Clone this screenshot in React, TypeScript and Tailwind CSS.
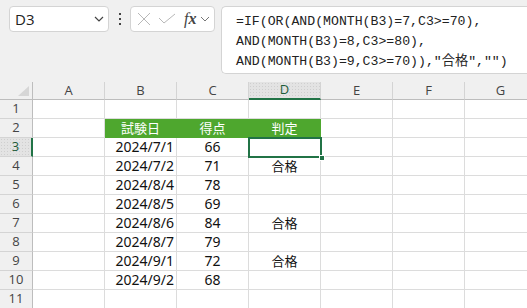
import React from 'react';

const cols = ['A', 'B', 'C', 'D', 'E', 'F', 'G'];

type Row = { b?: string; c?: string; d?: string; head?: boolean };

const rows: Row[] = [
  {},
  { b: '試験日', c: '得点', d: '判定', head: true },
  { b: '2024/7/1', c: '66' },
  { b: '2024/7/2', c: '71', d: '合格' },
  { b: '2024/8/4', c: '78' },
  { b: '2024/8/5', c: '69' },
  { b: '2024/8/6', c: '84', d: '合格' },
  { b: '2024/8/7', c: '79' },
  { b: '2024/9/1', c: '72', d: '合格' },
  { b: '2024/9/2', c: '68' },
  {},
];

const uiFont = { fontFamily: '"Open Sans", "Noto Sans", sans-serif' };
const cellFont = { fontFamily: '"Noto Sans", "Noto Sans CJK JP", sans-serif' };
const monoFont = { fontFamily: '"Liberation Mono", "Noto Sans CJK JP", monospace' };

const dotted = 'bg-[#e3e3e3] bg-[radial-gradient(#cfcfcf_0.6px,transparent_0.8px)] bg-[length:3px_3px]';

function Cell({ text, align, head, col }: { text?: string; align: string; head?: boolean; col: number }) {
  const green = head && col >= 1 && col <= 3;
  const jp = text ? /[^\x00-\x7f]/.test(text) : false;
  return (
    <div
      className={`h-[19px] border-r border-b flex items-center leading-none ${jp ? 'text-[13px]' : 'text-[14px]'} ${align} ${
        green ? 'bg-[#4ea72e] border-[#4ea72e] text-white' : 'bg-white border-[#dcdcdc] text-[#111]'
      }`}
      style={cellFont}
    >
      {text}
    </div>
  );
}

export default function App() {
  return (
    <div className="w-[527px] h-[308px] overflow-hidden bg-white relative">
      {/* toolbar */}
      <div className="h-[82px] bg-[#f0f0f0] flex items-start pt-[6px] pl-[9px]">
        <div className="w-[100px] h-[26px] bg-white border border-[#d4d4d4] rounded-[4px] flex items-center justify-between pl-[5px] pr-[4px]">
          <span className="text-[15px] text-[#222]" style={uiFont}>D3</span>
          <svg width="10" height="6" viewBox="0 0 10 6">
            <path d="M1 1 L5 5 L9 1" fill="none" stroke="#444" strokeWidth="1.2" />
          </svg>
        </div>
        <div className="w-[21px] h-[26px] flex flex-col items-center justify-center gap-[3px]">
          <span className="w-[2px] h-[2px] bg-[#444]" />
          <span className="w-[2px] h-[2px] bg-[#444]" />
          <span className="w-[2px] h-[2px] bg-[#444]" />
        </div>
        <div className="w-[85px] h-[26px] bg-white border border-[#d4d4d4] rounded-[4px] flex items-center pl-[5px]">
          <svg width="14" height="14" viewBox="0 0 14 14" className="ml-[1px]">
            <path d="M1 1 L13 13 M13 1 L1 13" stroke="#b8b8b8" strokeWidth="1" />
          </svg>
          <svg width="18" height="12" viewBox="0 0 18 12" className="ml-[7px]">
            <path d="M1 5 L6 10 L17 1" fill="none" stroke="#b8b8b8" strokeWidth="1" />
          </svg>
          <span
            className="ml-[8px] text-[16px] italic text-[#444] leading-none"
            style={{ fontFamily: '"Liberation Serif", "DejaVu Serif", serif' }}
          >
            <span className="font-normal">f</span>
            <span className="font-bold">x</span>
          </span>
          <svg width="10" height="6" viewBox="0 0 10 6" className="ml-[4px]">
            <path d="M1 1 L5 5 L9 1" fill="none" stroke="#777" strokeWidth="1" />
          </svg>
        </div>
        <div className="ml-[6px] flex-1 h-[68px] bg-white border border-r-0 border-[#d4d4d4] rounded-l-[5px] pl-[14px] pt-[5px]">
          <div className="text-[13.2px] leading-[20px] text-[#222] whitespace-pre" style={monoFont}>
            <div>=IF(OR(AND(MONTH(B3)=7,C3&gt;=70),</div>
            <div>AND(MONTH(B3)=8,C3&gt;=80),</div>
            <div>AND(MONTH(B3)=9,C3&gt;=70)),"合格","")</div>
          </div>
        </div>
      </div>

      {/* sheet */}
      <div className="grid grid-cols-[33px_repeat(7,72px)]">
        <div className="h-[18px] bg-[#f0f0f0] border-r border-b border-[#bdbdbd] flex items-end justify-end pr-[3px] pb-[3px]">
          <svg width="11" height="10" viewBox="0 0 11 10">
            <path d="M11 0 L11 10 L0 10 Z" fill="#d6d6d6" />
          </svg>
        </div>
        {cols.map((c) => (
          <div
            key={c}
            className={`h-[18px] flex items-center justify-center text-[13px] border-r ${
              c === 'D'
                ? `${dotted} border-b-2 border-b-[#217346] border-r-[#d4d4d4] text-[#1d5c3a]`
                : 'bg-[#f0f0f0] border-b border-[#bdbdbd] border-r-[#d4d4d4] text-[#444]'
            }`}
            style={uiFont}
          >
            {c}
          </div>
        ))}
        {rows.map((r, i) => (
          <React.Fragment key={i}>
            <div
              className={`h-[19px] flex items-center justify-center text-[13px] border-b ${
                i === 2
                  ? `${dotted} border-r-2 border-r-[#217346] border-b-[#d4d4d4] text-[#1d5c3a]`
                  : 'bg-[#f0f0f0] border-r border-r-[#bdbdbd] border-b-[#d4d4d4] text-[#444]'
              }`}
              style={uiFont}
            >
              {i + 1}
            </div>
            <Cell col={0} align="justify-center" />
            <Cell col={1} text={r.b} head={r.head} align={r.head ? 'justify-center' : 'justify-end pr-[2px]'} />
            <Cell col={2} text={r.c} head={r.head} align="justify-center" />
            <Cell col={3} text={r.d} head={r.head} align="justify-center" />
            <Cell col={4} align="justify-center" />
            <Cell col={5} align="justify-center" />
            <Cell col={6} align="justify-center" />
          </React.Fragment>
        ))}
      </div>

      {/* active cell D3 */}
      <div className="absolute left-[248px] top-[137px] w-[74px] h-[21px] border-2 border-[#217346]" />
      <div className="absolute left-[319px] top-[155px] w-[6px] h-[6px] bg-[#217346] border border-white" />
    </div>
  );
}
